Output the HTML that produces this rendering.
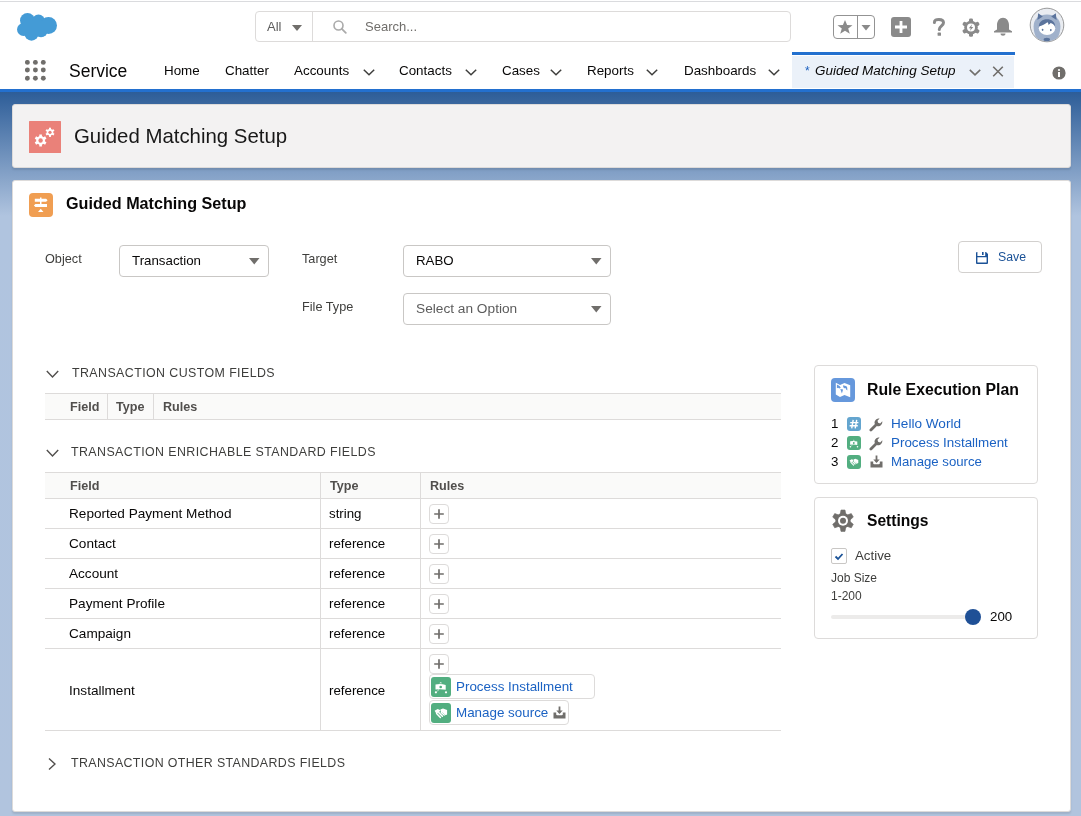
<!DOCTYPE html>
<html><head><meta charset="utf-8"><title>Guided Matching Setup</title>
<style>
html,body{margin:0;padding:0;}
body{width:1081px;height:816px;overflow:hidden;position:relative;font-family:"Liberation Sans",sans-serif;
background:linear-gradient(to bottom,#2d5d98 92px,#b0c4df 216px,#b1c4de 816px);}
.a{position:absolute;}
.t{position:absolute;white-space:nowrap;will-change:transform;}
</style></head><body>
<div class="a" style="left:0px;top:0px;width:1081px;height:89px;background:#fff;"></div>
<div class="a" style="left:0px;top:1px;width:1081px;height:1px;background:#dadbde;"></div>
<svg class="a" style="left:15px;top:11px;" width="45" height="32" viewBox="0 0 45 32"><g fill="#449bd6"><circle cx="12.5" cy="9.5" r="7.5"/><circle cx="23.5" cy="10" r="6.5"/><circle cx="33.5" cy="14.5" r="8.5"/><circle cx="8.5" cy="18.5" r="6.5"/><circle cx="16.5" cy="22.5" r="7.2"/><circle cx="26" cy="19.5" r="6.8"/><rect x="9" y="10" width="26" height="12"/></g></svg>
<div class="a" style="left:255px;top:11px;width:536px;height:31px;box-sizing:border-box;border:1px solid #dddbda;border-radius:4px;background:#fff;"></div>
<div class="a" style="left:312px;top:12px;width:1px;height:29px;background:#dddbda;"></div>
<div class="t" style="left:266.5px;top:19px;font-size:13px;line-height:15px;color:#5c5c5c;">All</div>
<svg class="a" style="left:292px;top:25px;" width="10" height="6" viewBox="0 0 10 6"><path d="M0 0H10L5 6Z" fill="#706e6b"/></svg>
<svg class="a" style="left:333px;top:20px;" width="14" height="14" viewBox="0 0 14 14"><circle cx="5.5" cy="5.5" r="4.5" fill="none" stroke="#aaa" stroke-width="1.6"/><path d="M8.8 8.8L12.8 12.8" stroke="#aaa" stroke-width="1.8" stroke-linecap="round"/></svg>
<div class="t" style="left:364.5px;top:19px;font-size:13px;line-height:15px;color:#706e6b;">Search...</div>
<div class="a" style="left:833px;top:15px;width:42px;height:24px;box-sizing:border-box;border:1px solid #939393;border-radius:4px;"></div>
<div class="a" style="left:856.5px;top:15px;width:1.5px;height:24px;background:#939393;"></div>
<svg class="a" style="left:837px;top:19px;" width="16" height="16" viewBox="0 0 16 16"><path d="M8 1L10.1 6.1L15.5 6.2L11.2 9.5L12.8 14.8L8 11.7L3.2 14.8L4.8 9.5L0.5 6.2L5.9 6.1Z" fill="#8a8a8a"/></svg>
<svg class="a" style="left:861px;top:25px;" width="10" height="6" viewBox="0 0 10 6"><path d="M0.5 0H9.5L5 5.5Z" fill="#8a8a8a"/></svg>
<svg class="a" style="left:891px;top:17px;" width="20" height="20" viewBox="0 0 20 20"><rect x="0" y="0" width="20" height="20" rx="3" fill="#8a8a8a"/><path d="M10 4V16M4 10H16" stroke="#fff" stroke-width="2.8"/></svg>
<svg class="a" style="left:931px;top:17px;" width="16" height="20" viewBox="0 0 16 20"><path d="M3.4 5.6C3.4 3.2 5.3 2.4 7.9 2.4C10.5 2.4 12.5 3.6 12.5 5.8C12.5 8.8 8.3 9 8.3 12.6" fill="none" stroke="#8a8a8a" stroke-width="3" stroke-linecap="round"/><rect x="6.6" y="15.6" width="3.4" height="3.2" rx="0.6" fill="#8a8a8a"/></svg>
<svg class="a" style="left:962px;top:18px;" width="18" height="19" viewBox="0 0 18 19"><g transform="translate(9 9.6)" fill="#8a8a8a"><rect x="-2" y="-9.2" width="4" height="5" rx="1.4" transform="rotate(0)"/><rect x="-2" y="-9.2" width="4" height="5" rx="1.4" transform="rotate(60)"/><rect x="-2" y="-9.2" width="4" height="5" rx="1.4" transform="rotate(120)"/><rect x="-2" y="-9.2" width="4" height="5" rx="1.4" transform="rotate(180)"/><rect x="-2" y="-9.2" width="4" height="5" rx="1.4" transform="rotate(240)"/><rect x="-2" y="-9.2" width="4" height="5" rx="1.4" transform="rotate(300)"/><circle r="6.8"/><circle r="4" fill="#fff"/><path d="M1.2 -3.3L-2.2 0.7H-0.2L-1.1 3.4L2.3 -0.7H0.2Z" fill="#8a8a8a"/></g></svg>
<svg class="a" style="left:993px;top:17px;" width="20" height="20" viewBox="0 0 20 20"><path d="M4 12.5V8C4 4 6.5 0.8 10 0.8C13.5 0.8 16 4 16 8V12.5L19 14.2V15.6H1V14.2Z" fill="#8a8a8a"/><path d="M7.5 16.6H12.5C12.5 18 11.4 18.8 10 18.8C8.6 18.8 7.5 18 7.5 16.6Z" fill="#8a8a8a"/></svg>
<svg class="a" style="left:1029px;top:7px;" width="36" height="36" viewBox="0 0 36 36"><defs><clipPath id="avc"><circle cx="18" cy="18" r="16.4"/></clipPath></defs><circle cx="18" cy="18" r="16.8" fill="#e9ecf1" stroke="#8f8f8f" stroke-width="0.9"/><g clip-path="url(#avc)"><path d="M4.6 19.5C4.6 11.5 10.5 7.5 18 7.5C25.5 7.5 31.4 11.5 31.4 19.5C31.4 26 29 31 26 35H10C7 31 4.6 26 4.6 19.5Z" fill="#a0b1cb"/><path d="M8.4 13L9.2 6.2L13.8 9.4Z M27.6 13L26.8 6.2L22.2 9.4Z" fill="#5a739c"/><ellipse cx="18" cy="21.2" rx="8.2" ry="6.9" fill="#fff"/><path d="M9.8 19.5C9.8 14.8 13.5 12.2 18 12.2C22.5 12.2 26.2 14.8 26.2 19.5C25 17.8 23.5 16.5 21.5 16C21 17 20 17.5 19 17.5C19.6 16.5 19.2 15.6 18.4 15.2C16.4 17 13 18.4 9.8 19.5Z" fill="#5a739c"/><ellipse cx="13.6" cy="22.8" rx="0.9" ry="1.1" fill="#5a739c"/><ellipse cx="21.8" cy="23.1" rx="0.9" ry="1.1" fill="#5a739c"/><ellipse cx="17.8" cy="32.5" rx="3.2" ry="1.8" fill="#5a739c"/></g></svg>
<svg class="a" style="left:25px;top:60px;" width="21" height="21" viewBox="0 0 21 21"><g fill="#706e6b"><circle cx="2.4" cy="2.4" r="2.45"/><circle cx="2.4" cy="10" r="2.45"/><circle cx="2.4" cy="18.3" r="2.45"/><circle cx="10.4" cy="2.4" r="2.45"/><circle cx="10.4" cy="10" r="2.45"/><circle cx="10.4" cy="18.3" r="2.45"/><circle cx="18.3" cy="2.4" r="2.45"/><circle cx="18.3" cy="10" r="2.45"/><circle cx="18.3" cy="18.3" r="2.45"/></g></svg>
<div class="t" style="left:68.7px;top:60.8px;font-size:17.5px;line-height:20px;color:#080707;">Service</div>
<div class="t" style="left:163.6px;top:63px;font-size:13.4px;line-height:15px;color:#080707;">Home</div>
<div class="t" style="left:225px;top:63px;font-size:13.4px;line-height:15px;color:#080707;">Chatter</div>
<div class="t" style="left:293.8px;top:63px;font-size:13.4px;line-height:15px;color:#080707;">Accounts</div>
<svg class="a" style="left:362.5px;top:68.5px;" width="12" height="7" viewBox="0 0 12 7"><path d="M0.8 0.8L6 5.8L11.2 0.8" fill="none" stroke="#3e3e3c" stroke-width="1.5"/></svg>
<div class="t" style="left:399.2px;top:63px;font-size:13.4px;line-height:15px;color:#080707;">Contacts</div>
<svg class="a" style="left:465.3px;top:68.5px;" width="12" height="7" viewBox="0 0 12 7"><path d="M0.8 0.8L6 5.8L11.2 0.8" fill="none" stroke="#3e3e3c" stroke-width="1.5"/></svg>
<div class="t" style="left:502.2px;top:63px;font-size:13.4px;line-height:15px;color:#080707;">Cases</div>
<svg class="a" style="left:550px;top:68.5px;" width="12" height="7" viewBox="0 0 12 7"><path d="M0.8 0.8L6 5.8L11.2 0.8" fill="none" stroke="#3e3e3c" stroke-width="1.5"/></svg>
<div class="t" style="left:587.2px;top:63px;font-size:13.4px;line-height:15px;color:#080707;">Reports</div>
<svg class="a" style="left:646.3px;top:68.5px;" width="12" height="7" viewBox="0 0 12 7"><path d="M0.8 0.8L6 5.8L11.2 0.8" fill="none" stroke="#3e3e3c" stroke-width="1.5"/></svg>
<div class="t" style="left:683.7px;top:63px;font-size:13.4px;line-height:15px;color:#080707;">Dashboards</div>
<svg class="a" style="left:768px;top:68.5px;" width="12" height="7" viewBox="0 0 12 7"><path d="M0.8 0.8L6 5.8L11.2 0.8" fill="none" stroke="#3e3e3c" stroke-width="1.5"/></svg>
<div class="a" style="left:792px;top:56px;width:222px;height:32px;background:#ebf1f9;"></div>
<div class="a" style="left:792px;top:52px;width:223px;height:3px;background:#2370cf;"></div>
<div class="t" style="left:805px;top:64px;font-size:12px;line-height:14px;color:#1b5fbf;">*</div>
<div class="t" style="left:814.6px;top:63.099999999999994px;font-size:13.46px;line-height:15px;color:#080707;font-style:italic;">Guided Matching Setup</div>
<svg class="a" style="left:969px;top:68.5px;" width="12" height="7" viewBox="0 0 12 7"><path d="M0.8 0.8L6 5.8L11.2 0.8" fill="none" stroke="#706e6b" stroke-width="1.6"/></svg>
<svg class="a" style="left:992px;top:65.5px;" width="12" height="11" viewBox="0 0 12 11"><path d="M1.2 0.8L10.8 10.2M10.8 0.8L1.2 10.2" stroke="#706e6b" stroke-width="1.6"/></svg>
<svg class="a" style="left:1052px;top:66px;" width="14" height="14" viewBox="0 0 14 14"><circle cx="7" cy="7" r="6.6" fill="#706e6b"/><rect x="6" y="6" width="2" height="5" fill="#fff"/><circle cx="7" cy="4" r="1.1" fill="#fff"/></svg>
<div class="a" style="left:0px;top:89px;width:1081px;height:3px;background:#2370cf;"></div>

<div class="a" style="left:12px;top:104px;width:1059px;height:64px;box-sizing:border-box;background:#f3f2f2;border:1px solid #dddbda;border-radius:3px;box-shadow:0 2px 2px rgba(0,0,0,.1);"></div>
<svg class="a" style="left:29px;top:121px;" width="32" height="32" viewBox="0 0 32 32"><rect width="32" height="32" rx="0.5" fill="#ea8179"/><g fill="#fff" transform="translate(11.6 19.5)"><rect x="-1.3" y="-6" width="2.6" height="3" transform="rotate(0)"/><rect x="-1.3" y="-6" width="2.6" height="3" transform="rotate(60)"/><rect x="-1.3" y="-6" width="2.6" height="3" transform="rotate(120)"/><rect x="-1.3" y="-6" width="2.6" height="3" transform="rotate(180)"/><rect x="-1.3" y="-6" width="2.6" height="3" transform="rotate(240)"/><rect x="-1.3" y="-6" width="2.6" height="3" transform="rotate(300)"/><circle r="4.4"/><circle r="2.2" fill="#ea8179"/></g><g fill="#fff" transform="translate(21 11.3)"><rect x="-1" y="-4.6" width="2" height="2.4" transform="rotate(0)"/><rect x="-1" y="-4.6" width="2" height="2.4" transform="rotate(60)"/><rect x="-1" y="-4.6" width="2" height="2.4" transform="rotate(120)"/><rect x="-1" y="-4.6" width="2" height="2.4" transform="rotate(180)"/><rect x="-1" y="-4.6" width="2" height="2.4" transform="rotate(240)"/><rect x="-1" y="-4.6" width="2" height="2.4" transform="rotate(300)"/><circle r="3.3"/><circle r="1.6" fill="#ea8179"/></g></svg>
<div class="t" style="left:73.5px;top:124.80000000000001px;font-size:20.4px;line-height:22px;color:#181818;">Guided Matching Setup</div>
<div class="a" style="left:12px;top:180px;width:1059px;height:632px;box-sizing:border-box;background:#fff;border:1px solid #dddbda;border-radius:3px;box-shadow:0 2px 2px rgba(0,0,0,.1);"></div>
<svg class="a" style="left:29px;top:193px;" width="24" height="24" viewBox="0 0 24 24"><rect width="24" height="24" rx="4" fill="#f09e52"/><path d="M5.8 5.7H17.1L18.6 7.25L17.1 8.8H5.8Z M11 4.6H12.5V5.7H11Z M6.4 11H18V14.1H6.4L4.9 12.55Z M11 8.8H12.5V11H11Z M9 19L11.75 15.7L14.5 19Z" fill="#fff"/></svg>
<div class="t" style="left:65.5px;top:194.4px;font-size:16.17px;line-height:18px;color:#080707;font-weight:700;">Guided Matching Setup</div>
<div class="t" style="left:45.4px;top:251.8px;font-size:12.7px;line-height:14px;color:#3e3e3c;">Object</div>
<div class="a" style="left:119px;top:245px;width:150px;height:32px;box-sizing:border-box;border:1px solid #c9c7c5;border-radius:4px;background:#fff;"></div>
<div class="t" style="left:132px;top:253px;font-size:13.3px;line-height:15px;color:#080707;">Transaction</div>
<svg class="a" style="left:249px;top:258px;" width="11" height="7" viewBox="0 0 11 7"><path d="M0 0H10.5L5.25 6.5Z" fill="#706e6b"/></svg>
<div class="t" style="left:301.6px;top:251.7px;font-size:12.7px;line-height:14px;color:#3e3e3c;">Target</div>
<div class="a" style="left:403px;top:245px;width:208px;height:32px;box-sizing:border-box;border:1px solid #c9c7c5;border-radius:4px;background:#fff;"></div>
<div class="t" style="left:416px;top:253px;font-size:13.3px;line-height:15px;color:#080707;">RABO</div>
<svg class="a" style="left:591px;top:258px;" width="11" height="7" viewBox="0 0 11 7"><path d="M0 0H10.5L5.25 6.5Z" fill="#706e6b"/></svg>
<div class="t" style="left:301.6px;top:300px;font-size:12.7px;line-height:14px;color:#3e3e3c;">File Type</div>
<div class="a" style="left:403px;top:293px;width:208px;height:32px;box-sizing:border-box;border:1px solid #c9c7c5;border-radius:4px;background:#fff;"></div>
<div class="t" style="left:416px;top:301px;font-size:13.7px;line-height:15px;color:#5c5c5c;">Select an Option</div>
<svg class="a" style="left:591px;top:306px;" width="11" height="7" viewBox="0 0 11 7"><path d="M0 0H10.5L5.25 6.5Z" fill="#706e6b"/></svg>
<div class="a" style="left:958px;top:241px;width:84px;height:32px;box-sizing:border-box;border:1px solid #d2d0ce;border-radius:4px;background:#fff;"></div>
<svg class="a" style="left:975px;top:251px;" width="14" height="14" viewBox="0 0 14 14"><path fill-rule="evenodd" d="M1 2Q1 1 2 1H2.4V5.1H10.2V1H11L13 3V12Q13 13 12 13H2Q1 13 1 12ZM2.4 6.3H11.6V11.6H2.4Z" fill="#1b5297"/><rect x="7" y="1" width="1.6" height="3" fill="#1b5297"/></svg>
<div class="t" style="left:997.6px;top:250px;font-size:12.3px;line-height:14px;color:#1b5297;">Save</div>
<svg class="a" style="left:45.5px;top:369.5px;" width="13" height="9" viewBox="0 0 13 9"><path d="M0.8 1L6.5 7L12.2 1" fill="none" stroke="#514f4d" stroke-width="1.4"/></svg>
<div class="t" style="left:71.5px;top:366.4px;font-size:12.4px;line-height:14px;color:#3e3e3c;letter-spacing:0.42px;">TRANSACTION CUSTOM FIELDS</div>
<div class="a" style="left:45px;top:393px;width:736px;height:27px;box-sizing:border-box;background:#fafaf9;border-top:1px solid #dddbda;border-bottom:1px solid #dddbda;"></div>
<div class="a" style="left:107px;top:394px;width:1px;height:25px;background:#dddbda;"></div>
<div class="a" style="left:153px;top:394px;width:1px;height:25px;background:#dddbda;"></div>
<div class="t" style="left:69.7px;top:400.2px;font-size:12.6px;line-height:14px;color:#514f4d;font-weight:700;">Field</div>
<div class="t" style="left:116.4px;top:400.2px;font-size:12.6px;line-height:14px;color:#514f4d;font-weight:700;">Type</div>
<div class="t" style="left:162.7px;top:400.2px;font-size:12.6px;line-height:14px;color:#514f4d;font-weight:700;">Rules</div>
<svg class="a" style="left:45.5px;top:448.5px;" width="13" height="9" viewBox="0 0 13 9"><path d="M0.8 1L6.5 7L12.2 1" fill="none" stroke="#514f4d" stroke-width="1.4"/></svg>
<div class="t" style="left:71.1px;top:445.4px;font-size:12.4px;line-height:14px;color:#3e3e3c;letter-spacing:0.42px;">TRANSACTION ENRICHABLE STANDARD FIELDS</div>
<div class="a" style="left:45px;top:472px;width:736px;height:27px;box-sizing:border-box;background:#fafaf9;border-top:1px solid #dddbda;border-bottom:1px solid #dddbda;"></div>
<div class="t" style="left:69.5px;top:479px;font-size:12.6px;line-height:14px;color:#514f4d;font-weight:700;">Field</div>
<div class="t" style="left:329.5px;top:479px;font-size:12.6px;line-height:14px;color:#514f4d;font-weight:700;">Type</div>
<div class="t" style="left:429.7px;top:479px;font-size:12.6px;line-height:14px;color:#514f4d;font-weight:700;">Rules</div>
<div class="a" style="left:45px;top:528px;width:736px;height:1px;background:#dddbda;"></div>
<div class="t" style="left:69.2px;top:505.5px;font-size:13.6px;line-height:15px;color:#080707;">Reported Payment Method</div>
<div class="t" style="left:329px;top:505.5px;font-size:13.3px;line-height:15px;color:#080707;">string</div>
<div class="a" style="left:429px;top:504px;width:20px;height:20px;box-sizing:border-box;border:1px solid #dddbda;border-radius:4px;background:#fff;"></div>
<svg class="a" style="left:433px;top:508px;" width="12" height="12" viewBox="0 0 12 12"><path d="M6 1.2V10.8M1.2 6H10.8" stroke="#706e6b" stroke-width="1.7"/></svg>
<div class="a" style="left:45px;top:558px;width:736px;height:1px;background:#dddbda;"></div>
<div class="t" style="left:69.2px;top:535.5px;font-size:13.6px;line-height:15px;color:#080707;">Contact</div>
<div class="t" style="left:329px;top:535.5px;font-size:13.3px;line-height:15px;color:#080707;">reference</div>
<div class="a" style="left:429px;top:534px;width:20px;height:20px;box-sizing:border-box;border:1px solid #dddbda;border-radius:4px;background:#fff;"></div>
<svg class="a" style="left:433px;top:538px;" width="12" height="12" viewBox="0 0 12 12"><path d="M6 1.2V10.8M1.2 6H10.8" stroke="#706e6b" stroke-width="1.7"/></svg>
<div class="a" style="left:45px;top:588px;width:736px;height:1px;background:#dddbda;"></div>
<div class="t" style="left:69.2px;top:565.5px;font-size:13.6px;line-height:15px;color:#080707;">Account</div>
<div class="t" style="left:329px;top:565.5px;font-size:13.3px;line-height:15px;color:#080707;">reference</div>
<div class="a" style="left:429px;top:564px;width:20px;height:20px;box-sizing:border-box;border:1px solid #dddbda;border-radius:4px;background:#fff;"></div>
<svg class="a" style="left:433px;top:568px;" width="12" height="12" viewBox="0 0 12 12"><path d="M6 1.2V10.8M1.2 6H10.8" stroke="#706e6b" stroke-width="1.7"/></svg>
<div class="a" style="left:45px;top:618px;width:736px;height:1px;background:#dddbda;"></div>
<div class="t" style="left:69.2px;top:595.5px;font-size:13.6px;line-height:15px;color:#080707;">Payment Profile</div>
<div class="t" style="left:329px;top:595.5px;font-size:13.3px;line-height:15px;color:#080707;">reference</div>
<div class="a" style="left:429px;top:594px;width:20px;height:20px;box-sizing:border-box;border:1px solid #dddbda;border-radius:4px;background:#fff;"></div>
<svg class="a" style="left:433px;top:598px;" width="12" height="12" viewBox="0 0 12 12"><path d="M6 1.2V10.8M1.2 6H10.8" stroke="#706e6b" stroke-width="1.7"/></svg>
<div class="a" style="left:45px;top:648px;width:736px;height:1px;background:#dddbda;"></div>
<div class="t" style="left:69.2px;top:625.5px;font-size:13.6px;line-height:15px;color:#080707;">Campaign</div>
<div class="t" style="left:329px;top:625.5px;font-size:13.3px;line-height:15px;color:#080707;">reference</div>
<div class="a" style="left:429px;top:624px;width:20px;height:20px;box-sizing:border-box;border:1px solid #dddbda;border-radius:4px;background:#fff;"></div>
<svg class="a" style="left:433px;top:628px;" width="12" height="12" viewBox="0 0 12 12"><path d="M6 1.2V10.8M1.2 6H10.8" stroke="#706e6b" stroke-width="1.7"/></svg>
<div class="a" style="left:45px;top:730px;width:736px;height:1px;background:#dddbda;"></div>
<div class="t" style="left:69.2px;top:682.5px;font-size:13.6px;line-height:15px;color:#080707;">Installment</div>
<div class="t" style="left:329px;top:682.5px;font-size:13.3px;line-height:15px;color:#080707;">reference</div>
<div class="a" style="left:320px;top:473px;width:1px;height:257px;background:#dddbda;"></div>
<div class="a" style="left:420px;top:473px;width:1px;height:257px;background:#dddbda;"></div>
<div class="a" style="left:429px;top:654px;width:20px;height:20px;box-sizing:border-box;border:1px solid #dddbda;border-radius:4px;background:#fff;"></div>
<svg class="a" style="left:433px;top:658px;" width="12" height="12" viewBox="0 0 12 12"><path d="M6 1.2V10.8M1.2 6H10.8" stroke="#706e6b" stroke-width="1.7"/></svg>
<div class="a" style="left:429px;top:674px;width:166px;height:25px;box-sizing:border-box;border:1px solid #dddbda;border-radius:4px;background:#fff;"></div>
<svg class="a" style="left:431px;top:677px;" width="20" height="20" viewBox="0 0 20 20"><rect width="20" height="20" rx="3" fill="#52ae80"/><g fill="#fff"><path d="M4.5 7.6Q9.6 6.4 14.7 8V12.8Q9.6 11.6 4.5 12.6Z"/><path d="M8.4 6.3Q9.7 4.4 11 6.3Z"/><circle cx="4.9" cy="15.3" r="1.1"/><circle cx="15" cy="15.3" r="1.1"/><path d="M5.8 14.4L8 12.6" stroke="#fff" stroke-width="0.9" stroke-dasharray="1 0.8"/></g><circle cx="9.7" cy="10" r="1.3" fill="#52ae80"/></svg>
<div class="t" style="left:456.3px;top:678.5px;font-size:13.4px;line-height:15px;color:#1b62c3;">Process Installment</div>
<div class="a" style="left:429px;top:700px;width:140px;height:25px;box-sizing:border-box;border:1px solid #dddbda;border-radius:4px;background:#fff;"></div>
<svg class="a" style="left:431px;top:703px;" width="20" height="20" viewBox="0 0 20 20"><rect width="20" height="20" rx="3" fill="#52ae80"/><g fill="#fff"><path d="M9.3 6.6L12 5.4L16.1 7V11.6L14.6 12.2L11.6 9.6L10.2 9.9Z"/><path d="M3.6 7.7L6.6 6L9.6 7.2L7.6 9.6L5.3 10.4Z"/></g><g stroke="#fff" stroke-width="1.5" stroke-linecap="round"><path d="M5.6 10.4L9.4 14.4"/><path d="M7.8 9.6L11.4 13.2"/><path d="M10.3 9.5L13.2 12"/></g></svg>
<div class="t" style="left:456.3px;top:704.5px;font-size:13.4px;line-height:15px;color:#1b62c3;">Manage source</div>
<svg class="a" style="left:552.5px;top:706px;" width="13" height="13" viewBox="0 0 13 13"><path d="M6.5 0.5V6.5" stroke="#706e6b" stroke-width="1.8"/><path d="M3.3 4.5H9.7L6.5 8Z" fill="#706e6b"/><path d="M0.5 6.5H3.2V8.3Q3.2 9.3 4.2 9.3H8.8Q9.8 9.3 9.8 8.3V6.5H12.5V12.5H0.5Z" fill="#706e6b"/></svg>
<svg class="a" style="left:47.5px;top:758px;" width="8" height="12" viewBox="0 0 8 12"><path d="M1 0.6L7 6L1 11.4" fill="none" stroke="#514f4d" stroke-width="1.4"/></svg>
<div class="t" style="left:71.1px;top:756.2px;font-size:12.4px;line-height:14px;color:#3e3e3c;letter-spacing:0.38px;">TRANSACTION OTHER STANDARDS FIELDS</div>
<div class="a" style="left:814px;top:365px;width:224px;height:119px;box-sizing:border-box;border:1px solid #dddbda;border-radius:4px;background:#fff;"></div>
<svg class="a" style="left:831px;top:378px;" width="24" height="24" viewBox="0 0 24 24"><rect width="24" height="24" rx="4" fill="#6698dc"/><path d="M4.8 4.8L9 7L13.5 5L19.2 7.3V19.2L13.5 17L9 19L4.8 16.6Z" fill="#fff"/><path d="M5.9 6.6L8.6 7.9L9.8 9.8L8.3 10.6L7.1 9.7L5.9 10.2ZM9.3 11L12.1 11.6L10.9 15.4ZM12.1 7.3L15.5 8.2L16.2 9.5L16.4 12.6L15.2 11.6L14.5 10.1L13.1 10.3L12.2 8.9Z" fill="#6698dc"/></svg>
<div class="t" style="left:867.2px;top:381px;font-size:15.8px;line-height:17px;color:#080707;font-weight:700;">Rule Execution Plan</div>
<div class="t" style="left:831.2px;top:416.3px;font-size:13.3px;line-height:15px;color:#080707;">1</div>
<svg class="a" style="left:847px;top:417.0px;" width="14" height="14" viewBox="0 0 14 14"><rect width="14" height="14" rx="3" fill="#64a5cf"/><path d="M6.2 2.8L4.7 11.4M9.7 2.8L8.2 11.4M3.2 5.6H11.4M2.6 8.7H10.8" stroke="#fff" stroke-width="1.4"/></svg>
<svg class="a" style="left:869px;top:418.0px;" width="14" height="14" viewBox="0 0 14 14"><path d="M1.9 12L7.4 6.5" stroke="#706e6b" stroke-width="2.8" stroke-linecap="round"/><path d="M5.6 5.6C5.2 2.6 7.6 0.2 10.6 0.6L8.5 2.7L9.1 4.8L11.2 5.4L13.3 3.3C13.7 6.3 11.3 8.7 8.3 8.3Z" fill="#706e6b"/></svg>
<div class="t" style="left:891.1px;top:416.3px;font-size:13.6px;line-height:15px;color:#1b62c3;">Hello World</div>
<div class="t" style="left:831.2px;top:435.1px;font-size:13.3px;line-height:15px;color:#080707;">2</div>
<svg class="a" style="left:847px;top:435.8px;" width="14" height="14" viewBox="0 0 14 14"><rect width="14" height="14" rx="3" fill="#52ae80"/><g transform="scale(0.7)"><g fill="#fff"><path d="M4.5 7.6Q9.6 6.4 14.7 8V12.8Q9.6 11.6 4.5 12.6Z"/><path d="M8.4 6.3Q9.7 4.4 11 6.3Z"/><circle cx="4.9" cy="15.3" r="1.1"/><circle cx="15" cy="15.3" r="1.1"/><path d="M5.8 14.4L8 12.6" stroke="#fff" stroke-width="0.9" stroke-dasharray="1 0.8"/></g><circle cx="9.7" cy="10" r="1.3" fill="#52ae80"/></g></svg>
<svg class="a" style="left:869px;top:436.8px;" width="14" height="14" viewBox="0 0 14 14"><path d="M1.9 12L7.4 6.5" stroke="#706e6b" stroke-width="2.8" stroke-linecap="round"/><path d="M5.6 5.6C5.2 2.6 7.6 0.2 10.6 0.6L8.5 2.7L9.1 4.8L11.2 5.4L13.3 3.3C13.7 6.3 11.3 8.7 8.3 8.3Z" fill="#706e6b"/></svg>
<div class="t" style="left:891.1px;top:435.1px;font-size:13.4px;line-height:15px;color:#1b62c3;">Process Installment</div>
<div class="t" style="left:831.2px;top:454px;font-size:13.3px;line-height:15px;color:#080707;">3</div>
<svg class="a" style="left:847px;top:454.7px;" width="14" height="14" viewBox="0 0 14 14"><rect width="14" height="14" rx="3" fill="#52ae80"/><g transform="scale(0.7)"><g fill="#fff"><path d="M9.3 6.6L12 5.4L16.1 7V11.6L14.6 12.2L11.6 9.6L10.2 9.9Z"/><path d="M3.6 7.7L6.6 6L9.6 7.2L7.6 9.6L5.3 10.4Z"/></g><g stroke="#fff" stroke-width="1.5" stroke-linecap="round"><path d="M5.6 10.4L9.4 14.4"/><path d="M7.8 9.6L11.4 13.2"/><path d="M10.3 9.5L13.2 12"/></g></g></svg>
<svg class="a" style="left:870px;top:455.2px;" width="13" height="13" viewBox="0 0 13 13"><path d="M6.5 0.5V6.5" stroke="#706e6b" stroke-width="1.8"/><path d="M3.3 4.5H9.7L6.5 8Z" fill="#706e6b"/><path d="M0.5 6.5H3.2V8.3Q3.2 9.3 4.2 9.3H8.8Q9.8 9.3 9.8 8.3V6.5H12.5V12.5H0.5Z" fill="#706e6b"/></svg>
<div class="t" style="left:891.1px;top:454px;font-size:13.2px;line-height:15px;color:#1b62c3;">Manage source</div>
<div class="a" style="left:814px;top:497px;width:224px;height:142px;box-sizing:border-box;border:1px solid #dddbda;border-radius:4px;background:#fff;"></div>
<svg class="a" style="left:832px;top:509px;" width="22" height="23" viewBox="0 0 22 23"><g transform="translate(11 11.7)" fill="#706e6b"><path d="M-2 -10.7H2L2.9 -6H-2.9Z" stroke="#706e6b" stroke-width="0.6" stroke-linejoin="round" transform="rotate(0)"/><path d="M-2 -10.7H2L2.9 -6H-2.9Z" stroke="#706e6b" stroke-width="0.6" stroke-linejoin="round" transform="rotate(60)"/><path d="M-2 -10.7H2L2.9 -6H-2.9Z" stroke="#706e6b" stroke-width="0.6" stroke-linejoin="round" transform="rotate(120)"/><path d="M-2 -10.7H2L2.9 -6H-2.9Z" stroke="#706e6b" stroke-width="0.6" stroke-linejoin="round" transform="rotate(180)"/><path d="M-2 -10.7H2L2.9 -6H-2.9Z" stroke="#706e6b" stroke-width="0.6" stroke-linejoin="round" transform="rotate(240)"/><path d="M-2 -10.7H2L2.9 -6H-2.9Z" stroke="#706e6b" stroke-width="0.6" stroke-linejoin="round" transform="rotate(300)"/><circle r="7.6"/><circle r="5" fill="#fff"/><circle r="3"/></g></svg>
<div class="t" style="left:867.2px;top:512px;font-size:15.6px;line-height:17px;color:#080707;font-weight:700;">Settings</div>
<div class="a" style="left:831px;top:548px;width:16px;height:16px;box-sizing:border-box;border:1px solid #c9c7c5;border-radius:2px;background:#fff;"></div>
<svg class="a" style="left:834px;top:551px;" width="10" height="10" viewBox="0 0 10 10"><path d="M1.5 5.5L4 8L8.5 3" fill="none" stroke="#1b5297" stroke-width="1.8"/></svg>
<div class="t" style="left:855px;top:548px;font-size:13.3px;line-height:15px;color:#3e3e3c;">Active</div>
<div class="t" style="left:831px;top:571px;font-size:12px;line-height:14px;color:#3e3e3c;">Job Size</div>
<div class="t" style="left:831px;top:589px;font-size:12px;line-height:14px;color:#3e3e3c;">1-200</div>
<div class="a" style="left:831px;top:615px;width:142px;height:4px;background:#ecebea;border-radius:2px;"></div>
<div class="a" style="left:965px;top:609px;width:16px;height:16px;background:#1f5096;border-radius:50%;"></div>
<div class="t" style="left:989.7px;top:609px;font-size:13.3px;line-height:15px;color:#080707;">200</div>

</body></html>
